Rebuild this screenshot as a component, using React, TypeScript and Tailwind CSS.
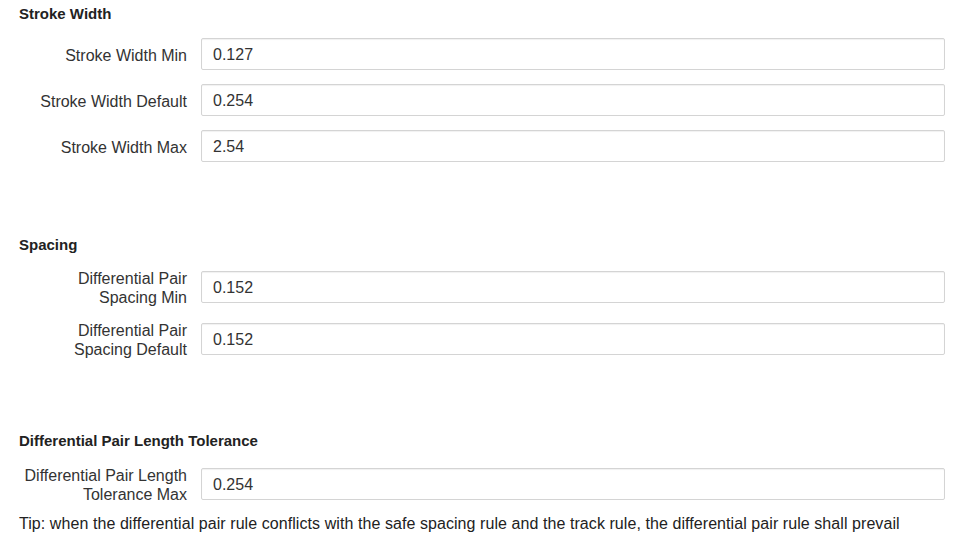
import React from 'react';

type Field = { label: string[]; value: string };

const Row: React.FC<{ field: Field }> = ({ field }) => {
  const tall = field.label.length > 1;
  return (
    <div className={`flex items-center ${tall ? 'h-[40px]' : 'h-[32px]'}`}>
      <label className="w-[187px] shrink-0 pl-[13px] pt-[2px] text-right text-[16px] leading-[19px] text-[#333]">
        {field.label.map((l) => (
          <div key={l}>{l}</div>
        ))}
      </label>
      <div className="ml-[14px] mr-[24px] flex h-[32px] flex-1 items-center rounded-[2px] border border-[#d4d4d4] bg-white pl-[11px] pt-[2px] text-[16px] text-[#333] shadow-[inset_0_1px_1px_rgba(0,0,0,0.06)]">
        {field.value}
      </div>
    </div>
  );
};

const Heading: React.FC<{ children: React.ReactNode; className?: string }> = ({ children, className }) => (
  <h3 className={`pl-[19px] text-[15px] font-bold leading-[20px] text-[#222] ${className ?? ''}`}>
    {children}
  </h3>
);

const App: React.FC = () => {
  return (
    <div
      className="h-[544px] w-[969px] overflow-hidden bg-white pt-[4px]"
      style={{ fontFamily: '"Liberation Sans", Arial, sans-serif' }}
    >
      <Heading>Stroke Width</Heading>
      <div className="mt-[14px] flex flex-col gap-[14px]">
        <Row field={{ label: ['Stroke Width Min'], value: '0.127' }} />
        <Row field={{ label: ['Stroke Width Default'], value: '0.254' }} />
        <Row field={{ label: ['Stroke Width Max'], value: '2.54' }} />
      </div>

      <Heading className="mt-[73px]">Spacing</Heading>
      <div className="mt-[12px] flex flex-col gap-[12px]">
        <Row field={{ label: ['Differential Pair', 'Spacing Min'], value: '0.152' }} />
        <Row field={{ label: ['Differential Pair', 'Spacing Default'], value: '0.152' }} />
      </div>

      <Heading className="mt-[72px]">Differential Pair Length Tolerance</Heading>
      <div className="mt-[13px]">
        <Row field={{ label: ['Differential Pair Length', 'Tolerance Max'], value: '0.254' }} />
      </div>

      <p className="mt-[10px] pl-[19px] text-[16px] leading-[20px] tracking-[0.07px] text-[#222]">
        Tip: when the differential pair rule conflicts with the safe spacing rule and the track rule, the differential pair rule shall prevail
      </p>
    </div>
  );
};

export default App;
